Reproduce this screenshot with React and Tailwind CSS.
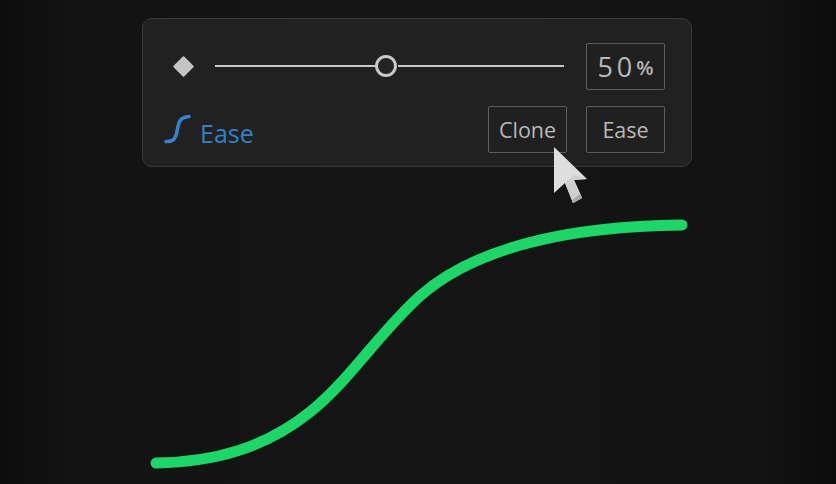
import React from 'react';

const font = "font-['Open_Sans','Liberation_Sans',sans-serif]";

const Cursor = () => (
  <svg className="absolute left-[545px] top-[140px]" width="50" height="72" viewBox="0 0 50 72">
    <path d="M9 7 L9 53 L20 43 L28 63 L37 58 L29 40 L42 39 Z" fill="#dedede" />
    <path d="M20 43 L28 63 L37 58 L29 40 L42 39 L29 35 Z" fill="#cfcfcf" />
    <path d="M28 63 L37 58 L35 54 L27 60 Z" fill="#a8a8a8" />
  </svg>
);

const BoxButton = ({ children }) => (
  <button className="w-[79px] h-[47px] pt-[2px] rounded-[2px] border border-[#5e5e5e] bg-[#202020] flex items-center justify-center text-[#b9b9b9] text-[21.5px]">
    {children}
  </button>
);

export default function App() {
  return (
    <div className={`relative w-[836px] h-[484px] overflow-hidden bg-[#141414] ${font}`}>
      <div className="absolute inset-0 bg-[linear-gradient(90deg,#0d0d0d_0px,#131313_76px,#151515_420px,#131313_760px,#0b0b0b_836px)]" />

      <div className="relative flex flex-col pt-[18px]">
        <div className="ml-[142px] w-[550px] h-[149px] rounded-[10px] border border-[#3a3a3a] bg-[#212121] pt-[24px] pr-[26px] pl-[21px] flex flex-col gap-[16px]">
          {/* Slider row */}
          <div className="flex items-center h-[47px]">
            <div className="ml-[12px] -mt-px w-[15px] h-[15px] rotate-45 rounded-[1px] bg-[#c4c4c4]" />
            <div className="ml-[24px] -mt-px w-[349px] flex items-center">
              <div className="h-[2px] w-[160px] bg-[#c9c9c9]" />
              <div className="w-[22px] h-[22px] rounded-full border-[3px] border-[#c9c9c9] bg-[#252525] shrink-0" />
              <div className="h-[2px] flex-1 bg-[#c9c9c9] ml-[1px]" />
            </div>
            <div className="ml-auto w-[79px] h-[47px] rounded-[2px] border border-[#5e5e5e] bg-[#202020] flex items-center justify-center text-[#b9b9b9]">
              <span className="text-[27px] tracking-[4px] leading-none">50</span>
              <span className="text-[20px] font-semibold leading-none mt-[3px]">%</span>
            </div>
          </div>

          {/* Label and buttons row */}
          <div className="flex items-center h-[47px]">
            <svg width="28" height="32" viewBox="0 0 28 32" className="shrink-0 mt-[-1px]">
              <path d="M2 28.5 C10 29 12 25 13.5 16 C15 7 17 4.5 25 3.5" fill="none" stroke="#2f86cf" strokeWidth="3.6" strokeLinecap="round" />
            </svg>
            <span className="ml-[8px] text-[25px] text-[#2f82c6] leading-none mt-[8px]">Ease</span>
            <div className="ml-auto flex gap-[19px]">
              <BoxButton>Clone</BoxButton>
              <BoxButton>Ease</BoxButton>
            </div>
          </div>
        </div>

        {/* Curve */}
        <svg width="836" height="317" viewBox="0 167 836 317" className="block">
          <path
            d="M156 463 C215 462 265 448 310 412 C350 380 378 334 420 296 C473 249 565 226 682 225"
            fill="none"
            stroke="#1bd767"
            strokeWidth="11"
            strokeLinecap="round"
          />
        </svg>
      </div>

      <Cursor />
    </div>
  );
}
